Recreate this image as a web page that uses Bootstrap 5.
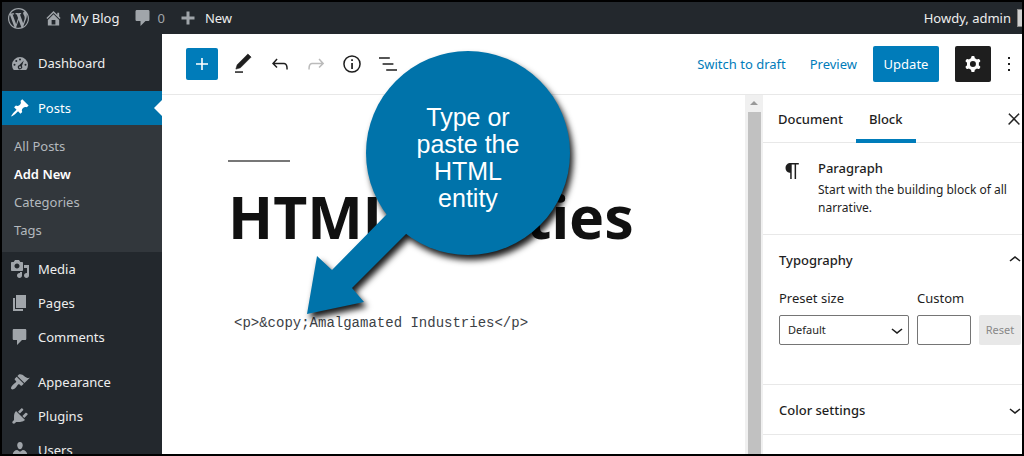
<!DOCTYPE html>
<html lang="en">
<head>
<meta charset="utf-8">
<meta name="viewport" content="width=device-width, initial-scale=1">
<title>Edit Post</title>
<link href="https://cdn.jsdelivr.net/npm/bootstrap@5.3.0/dist/css/bootstrap.min.css" rel="stylesheet">
<style>
body{font-family:"Noto Sans","Open Sans",sans-serif;font-size:13px;line-height:18px;color:#1e1e1e;background:#fff}
a{text-decoration:none}
svg{display:block;flex:none;fill:currentColor}
.frame{border:2px solid #000}
.adminbar{height:32px;background:#23282d;padding-left:6px}
.adminbar a{color:#eee}
.adminbar a.count{color:#a0a5aa;margin:0 14px}
.adminbar svg,.side-menu svg{color:#a0a5aa}
.avatar{width:5px;height:18px;margin-left:6px;background:#d0d0d0;border:1px solid #888;border-right:0}
.side-menu{width:160px;background:#23282d;padding-top:12px}
.side-menu .item{height:34px;padding-left:8px;gap:8px;color:#eee}
.side-menu .item.current{background:#0073aa;color:#fff}
.side-menu .item.current svg{color:#fff}
.item.current::after{content:"";position:absolute;right:0;border:8px solid transparent;border-right-color:#fff}
.menu-gap{margin-top:11px}
.submenu{background:#32373c;padding:7px 0 8px 12px}
.submenu a{height:28px;color:#b4b9be}
.submenu a.current{color:#fff;font-weight:600}
.toolbar{height:61px;border-bottom:1px solid #e8e8e8;padding:0 7px 0 24px}
.tools{margin-left:14px;gap:12px}
.tool{width:24px;height:24px;padding:0;border:0;background:none;color:#1e1e1e}
.tool:disabled{color:#bbb}
.tool-add{width:32px;height:32px;padding:4px;border:0;border-radius:2px;background:#007cba;color:#fff}
.toolbar a{color:#007cba}
.btn-update{width:66px;height:36px;padding:0;border:0;border-radius:2px;background:#007cba;color:#fff;font-size:13px}
.btn-cog{width:36px;height:36px;padding:6px;border:0;border-radius:2px;background:#1e1e1e;color:#fff}
.more{width:12px}
.canvas{padding:65px 16px 0 66px}
.rule{width:62px;height:2px;background:#777}
.post-title{font-size:59px;font-weight:700;line-height:72px;margin-top:18px;color:#111}
.code-block{font-family:"Liberation Mono",monospace;font-size:14px;line-height:20px;margin:61px 0 0 6px;color:#3c4146}
.scroll{width:18px;background:#f0f0f0}
.scroll .arrow{height:17px;color:#999}
.scroll .thumb{width:13px;background:#c1c1c1}
.inspector{width:259px}
.inspector .tabs{height:48px;border-bottom:1px solid #e8e8e8}
.inspector .tabs button{height:48px;border:0;border-bottom:4px solid transparent;padding:4px 13px 0;background:none;font-weight:500;color:#1e1e1e}
.inspector .tabs button:first-child{padding-left:15px}
.inspector .tabs button.on{border-color:#007cba}
.inspector .tabs .shut{padding:0 2px 0 0;border:0;margin-left:auto}
.section{border-bottom:1px solid #e8e8e8}
.blockcard{padding:16px 8px 16px 17px;gap:13px;height:92px}
.blockcard .about{font-size:12px}
.fold{height:49px;padding:0 0 0 16px;border:0;background:none;font-weight:500;color:#1e1e1e}
.fold svg{margin-right:-5px}
.typo{padding:5px 1px 39px 16px;gap:8px}
.typo label{margin-bottom:8px}
.typo .form-select,.typo .form-control{height:30px;border:1px solid #757575;border-radius:2px;font-size:11px;padding:0 8px;color:#1e1e1e}
.typo .form-select{width:130px;background:none}
.typo .form-control{width:54px}
.typo .reset{height:30px;width:42px;padding:0;border:0;border-radius:2px;background:#e8e8e8;color:#888;font-size:11px}
.chev{right:0;top:3px}
/* instruction bubble lying over the editor */
.bubble{left:136px;top:8px;width:280px;height:290px;pointer-events:none}
.bubble svg{fill:#0073aa;filter:drop-shadow(3px 5px 3px rgba(0,0,0,.9))}
.bubble p{left:118px;top:62px;width:104px;font:25px/27px "Liberation Sans",Arial,sans-serif;color:#fff}
</style>
</head>
<body>
<div class="frame d-flex flex-column vh-100 overflow-hidden">
<header class="adminbar d-flex align-items-center flex-shrink-0">
  <a href="#" class="me-3" aria-label="WordPress"><svg width="21" height="21" viewBox="0 0 20 20"><path d="M20 10c0-5.51-4.49-10-10-10C4.48 0 0 4.49 0 10c0 5.52 4.48 10 10 10 5.51 0 10-4.48 10-10zM7.78 15.37L4.37 6.22c.55-.02 1.17-.08 1.17-.08.5-.06.44-1.13-.06-1.11 0 0-1.45.11-2.37.11-.18 0-.37 0-.58-.01C4.12 2.69 6.87 1.11 10 1.11c2.33 0 4.45.87 6.05 2.34-.68-.11-1.65.39-1.65 1.58 0 .74.45 1.36.9 2.1.35.61.55 1.36.55 2.46 0 1.49-1.4 5-1.4 5l-3.03-8.37c.54-.02.82-.17.82-.17.5-.05.44-1.25-.06-1.22 0 0-1.44.12-2.38.12-.87 0-2.33-.12-2.33-.12-.5-.03-.56 1.2-.06 1.22l.92.08 1.26 3.41zM17.41 10c.24-.64.74-1.87.43-4.25.7 1.29 1.05 2.71 1.05 4.25 0 3.29-1.73 6.24-4.4 7.78.97-2.59 1.94-5.2 2.92-7.78zM6.1 18.09C3.12 16.65 1.11 13.53 1.11 10c0-1.3.23-2.48.72-3.59C3.25 10.3 4.67 14.2 6.1 18.09zm4.03-6.63l2.58 6.98c-.86.29-1.76.45-2.71.45-.79 0-1.57-.11-2.29-.33.81-2.38 1.62-4.74 2.42-7.1z"/></svg></a>
  <a href="#" class="d-flex align-items-center"><svg class="me-2" width="17" height="18" viewBox="1 1 18 18"><path fill-rule="evenodd" d="M16 8.5l1.53 1.53-1.06 1.06L10 4.6l-6.47 6.49-1.06-1.06L10 2.5l4 4v-2h2v4zm-6-2.46l6 5.99V18H4v-5.97zM12 17v-5H8v5h4z"/></svg>My Blog</a>
  <a href="#" class="count d-flex align-items-center"><svg class="me-1" width="20" height="20" viewBox="0 0 20 20"><path d="M4 2h11c1 0 1.500.5 1.500 1.500v8c0 1-.5 1.500-1.500 1.500h-2.500l-5 5v-5H4c-1 0-1.500-.5-1.500-1.500v-8C2.500 2.500 3 2 4 2z"/></svg>0</a>
  <a href="#" class="d-flex align-items-center"><svg class="me-2" width="18" height="18" viewBox="0 0 18 18"><path d="M7.500 2.500h3v5h5v3h-5v5h-3v-5h-5v-3h5z"/></svg>New</a>
  <a href="#" class="d-flex align-items-center ms-auto">Howdy, admin<span class="avatar"></span></a>
</header>
<div class="d-flex flex-grow-1 overflow-hidden">
<nav class="side-menu flex-shrink-0 overflow-hidden">
  <a href="#" class="item d-flex align-items-center"><svg width="20" height="20" viewBox="0 0 20 20"><path fill-rule="evenodd" d="M3.760 17h12.480A8 8 0 1 0 3.760 17zM9 6.500a1 1 0 1 0 2 0 1 1 0 1 0-2 0zM5.300 8a1 1 0 1 0 2 0 1 1 0 1 0-2 0zM3.500 11.700a1 1 0 1 0 2 0 1 1 0 1 0-2 0zM14.500 11.700a1 1 0 1 0 2 0 1 1 0 1 0-2 0zM13.800 7.400l-1.900 5.600a2.200 2.200 0 1 1-2.500-1zM10 13.200a1 1 0 1 0 .1 2 1 1 0 0 0-.1-2z"/></svg>Dashboard</a>
  <a href="#" class="item current menu-gap d-flex align-items-center position-relative"><svg width="20" height="20" viewBox="0 0 20 20"><path d="M10.440 3.020l1.820-1.820 6.360 6.350-1.830 1.820c-1.050-.68-2.480-.57-3.410.36l-.75.75c-.92.93-1.040 2.350-.35 3.410l-1.830 1.820-2.410-2.410-2.800 2.790c-.42.42-3.380 2.710-3.800 2.290s1.860-3.390 2.280-3.810l2.790-2.790L4.100 9.360l1.830-1.820c1.050.69 2.480.57 3.400-.36l.75-.75c.93-.92 1.050-2.350.36-3.410z"/></svg>Posts</a>
  <div class="submenu">
    <a href="#" class="d-flex align-items-center">All Posts</a>
    <a href="#" class="d-flex align-items-center current">Add New</a>
    <a href="#" class="d-flex align-items-center">Categories</a>
    <a href="#" class="d-flex align-items-center">Tags</a>
  </div>
  <a href="#" class="item d-flex align-items-center"><svg width="20" height="20" viewBox="0 0 20 20"><path fill-rule="evenodd" d="M13 11V4c0-.55-.45-1-1-1h-1.670L9 1H5L3.670 3H2c-.55 0-1 .45-1 1v7c0 .55.45 1 1 1h10c.55 0 1-.45 1-1zM7 4.500c1.380 0 2.500 1.120 2.500 2.500S8.380 9.500 7 9.500 4.500 8.380 4.500 7 5.620 4.500 7 4.500zM14 6h5v10.500c0 1.380-1.120 2.500-2.500 2.500S14 17.880 14 16.500s1.120-2.500 2.500-2.500c.17 0 .34.02.5.05V9h-3V6zm-4 8.050V13h2v3.500c0 1.380-1.120 2.500-2.500 2.500S7 17.880 7 16.500 8.120 14 9.500 14c.17 0 .34.02.5.05z"/></svg>Media</a>
  <a href="#" class="item d-flex align-items-center"><svg width="20" height="20" viewBox="0 0 20 20"><path d="M6 15V2h10v13H6zm-1 1h8v2H3V5h2v11z"/></svg>Pages</a>
  <a href="#" class="item d-flex align-items-center"><svg width="20" height="20" viewBox="0 0 20 20"><path d="M4 2h11c.8 0 1.300.5 1.300 1.300v8.400c0 .8-.5 1.300-1.300 1.300h-3l-5 5v-5H4c-.8 0-1.300-.5-1.300-1.300V3.300C2.700 2.500 3.200 2 4 2z"/></svg>Comments</a>
  <a href="#" class="item menu-gap d-flex align-items-center"><svg width="20" height="20" viewBox="0 0 20 20"><path d="M14.480 11.060L7.410 3.990l1.500-1.500c.5-.56 2.300-.47 3.510.32 1.210.8 1.430 1.280 2.910 2.100 1.180.64 2.450 1.260 4.450.85zm-.71.71L6.700 4.700 4.930 6.470c-.39.39-.39 1.020 0 1.410l1.060 1.060c.39.39.39 1.030 0 1.420-.6.6-1.430 1.110-2.210 1.690-.35.26-.7.53-1.010.84C1.430 14.230.4 16.080 1.400 17.070c.99 1 2.840-.03 4.180-1.360.31-.31.58-.66.85-1.020.57-.78 1.080-1.610 1.690-2.210.39-.39 1.020-.39 1.410 0l1.060 1.060c.39.39 1.020.39 1.410 0z"/></svg>Appearance</a>
  <a href="#" class="item d-flex align-items-center"><svg width="20" height="20" viewBox="0 0 20 20"><path d="M13.110 4.360L9.870 7.600 8 5.730l3.240-3.240c.35-.34 1.050-.2 1.560.32.52.51.66 1.210.31 1.550zm-8 1.770l.91-1.120 9.010 9.010-1.190.84c-.71.71-2.630 1.160-3.820 1.160H6.140L4.900 17.260c-.59.59-1.540.59-2.120 0-.59-.58-.59-1.530 0-2.120l1.240-1.240v-3.880c0-1.130.4-3.190 1.090-3.890zm7.260 3.970l3.240-3.240c.34-.35 1.040-.21 1.550.31.52.51.66 1.210.31 1.550l-3.240 3.250z"/></svg>Plugins</a>
  <a href="#" class="item d-flex align-items-center"><svg width="20" height="20" viewBox="0 0 20 20"><path d="M10 9.250c-2.270 0-2.730-3.440-2.730-3.440C7 4.020 7.820 2 9.970 2c2.160 0 2.980 2.020 2.710 3.810 0 0-.41 3.440-2.680 3.440zm0 2.570L12.720 10c2.390 0 4.520 2.330 4.520 4.530v2.490s-3.650 1.130-7.240 1.130c-3.650 0-7.240-1.130-7.240-1.130v-2.490c0-2.250 1.940-4.480 4.470-4.480z"/></svg>Users</a>
</nav>
<main class="d-flex flex-column flex-grow-1 position-relative overflow-hidden">
  <div class="toolbar d-flex align-items-center flex-shrink-0">
    <button class="tool-add" aria-label="Add block"><svg width="24" height="24" viewBox="0 0 24 24"><path d="M18 11.200h-5.200V6h-1.600v5.200H6v1.600h5.200V18h1.600v-5.200H18z"/></svg></button>
    <div class="tools d-flex me-auto">
      <button class="tool" aria-label="Tools"><svg width="24" height="24" viewBox="1 0 24 24"><path stroke="currentColor" stroke-width=".6" d="M20.100 5.100L16.900 2 6.200 12.700l-1.300 4.400 4.500-1.300L20.100 5.100z"/><path d="M4 20.800h8v-1.500H4v1.500z"/></svg></button>
      <button class="tool" aria-label="Undo"><svg width="24" height="24" viewBox="0 0 24 24"><path d="M18.300 11.700c-.6-.6-1.400-.9-2.300-.9H6.700l2.900-3.300-1.100-1-4.500 5L8.500 16l1-1-2.700-2.700H16c.5 0 .9.2 1.300.5 1 1 1 3.400 1 4.500v.3h1.500v-.2c0-1.500 0-4.300-1.500-5.700z"/></svg></button>
      <button class="tool" disabled aria-label="Redo"><svg width="24" height="24" viewBox="0 0 24 24"><path d="M15.600 6.500l-1.100 1 2.900 3.300H8c-.9 0-1.700.3-2.300.9-1.400 1.500-1.400 4.200-1.400 5.600v.2h1.500v-.3c0-1.100 0-3.500 1-4.500.3-.3.7-.5 1.300-.5h9.200L14.500 15l1.100 1.100 4.600-4.600-4.600-5z"/></svg></button>
      <button class="tool" aria-label="Details"><svg width="24" height="24" viewBox="0 0 24 24"><path fill-rule="evenodd" d="M12 3.200a8.800 8.800 0 1 0 0 17.600 8.800 8.800 0 0 0 0-17.600zm0 16.100a7.300 7.300 0 1 1 0-14.600 7.300 7.300 0 0 1 0 14.600zM11.200 11h1.700v6h-1.700zM11.200 7.300h1.700V9h-1.700z"/></svg></button>
      <button class="tool" aria-label="Outline"><svg width="24" height="24" viewBox="0 0 24 24"><path d="M13.800 5.200H3v1.500h10.800V5.200zm-3.600 12v1.500H21v-1.500H10.200zm7.200-6H6.600v1.500h10.800v-1.500z"/></svg></button>
    </div>
    <a href="#" class="me-4">Switch to draft</a>
    <a href="#" class="me-3">Preview</a>
    <button class="btn-update me-3">Update</button>
    <button class="btn-cog me-2" aria-label="Settings"><svg width="24" height="24" viewBox="0 0 24 24"><path fill-rule="evenodd" d="M10.289 4.836A1 1 0 0111.275 4h1.306a1 1 0 01.987.836l.244 1.466c.787.26 1.503.679 2.108 1.218l1.393-.522a1 1 0 011.216.437l.653 1.130a1 1 0 01-.23 1.273l-1.148.944a6.025 6.025 0 010 2.435l1.149.946a1 1 0 01.23 1.272l-.653 1.130a1 1 0 01-1.216.437l-1.394-.522c-.605.54-1.320.958-2.108 1.218l-.244 1.466a1 1 0 01-.987.836h-1.306a1 1 0 01-.986-.836l-.244-1.466a5.995 5.995 0 01-2.108-1.218l-1.394.522a1 1 0 01-1.217-.436l-.653-1.131a1 1 0 01.23-1.272l1.149-.946a6.026 6.026 0 010-2.435l-1.148-.944a1 1 0 01-.23-1.272l.653-1.131a1 1 0 011.217-.437l1.393.522a5.994 5.994 0 012.108-1.218zM14.929 12a3 3 0 11-6 0 3 3 0 016 0z"/></svg></button>
    <button class="tool more ms-1" aria-label="More"><svg width="12" height="24" viewBox="0 0 12 24"><path d="M5 5h2v2H5zM5 11h2v2H5zM5 17h2v2H5z"/></svg></button>
  </div>
  <div class="d-flex flex-grow-1 overflow-hidden">
    <article class="canvas flex-grow-1 overflow-hidden">
      <div class="rule"></div>
      <h1 class="post-title mb-0 text-nowrap">HTML Entities</h1>
      <p class="code-block text-nowrap">&lt;p&gt;&amp;copy;Amalgamated Industries&lt;/p&gt;</p>
    </article>
    <div class="scroll d-flex flex-column align-items-center flex-shrink-0">
      <div class="arrow d-flex align-items-center"><svg width="8" height="5" viewBox="0 0 8 5"><path d="M4 0l4 4H0z"/></svg></div>
      <div class="thumb flex-grow-1"></div>
    </div>
    <aside class="inspector flex-shrink-0">
      <div class="tabs d-flex align-items-center">
        <button>Document</button><button class="on">Block</button>
        <button class="shut" aria-label="Close"><svg width="12" height="12" viewBox="4 4 16 16"><path stroke="currentColor" stroke-width=".6" d="M13 11.800l6.100-6.300-1-1-6.100 6.200-6.100-6.200-1 1 6.100 6.300-6.500 6.700 1 1 6.500-6.600 6.500 6.600 1-1z"/></svg></button>
      </div>
      <div class="section blockcard d-flex">
        <svg width="25" height="24" viewBox="0 0 24 24"><path d="M18.300 4H9.900v-.1l-.9.2c-2.300.4-4 2.400-4 4.800s1.700 4.400 4 4.800l.7.1V20h1.500V5.500h2.900V20h1.500V5.500h2.700V4z"/></svg>
        <div><div class="fw-medium mb-1">Paragraph</div><div class="about">Start with the building block of all narrative.</div></div>
      </div>
      <div class="section">
        <button class="fold w-100 d-flex align-items-center justify-content-between">Typography<svg width="24" height="24" viewBox="0 0 24 24"><path d="M6.500 12.400L12 8l5.500 4.400-.9 1.200L12 10l-4.500 3.600-1-1.200z"/></svg></button>
        <div class="typo d-flex align-items-end">
          <div><label for="preset" class="d-block">Preset size</label><div class="position-relative"><select id="preset" class="form-select"><option>Default</option></select><svg class="chev position-absolute" width="24" height="24" viewBox="0 0 24 24"><path d="M17.500 11.600L12 16l-5.500-4.400.9-1.200L12 14l4.500-3.600 1 1.200z"/></svg></div></div>
          <div><label for="custom" class="d-block">Custom</label><input id="custom" type="text" class="form-control"></div>
          <button class="reset" disabled>Reset</button>
        </div>
      </div>
      <div class="section"><button class="fold w-100 d-flex align-items-center justify-content-between">Color settings<svg width="24" height="24" viewBox="0 0 24 24"><path d="M17.500 11.600L12 16l-5.500-4.400.9-1.200L12 14l4.500-3.600 1 1.200z"/></svg></button></div>
    </aside>
  </div>
  <div class="bubble position-absolute">
    <svg width="280" height="290" viewBox="0 0 280 290"><circle cx="170" cy="111" r="102"/><path d="M9 272l10-58 15 14 55-56 20 19-55 55 12 14z"/></svg>
    <p class="position-absolute text-center mb-0">Type or paste the HTML entity</p>
  </div>
</main>
</div>
</div>
<script src="https://cdn.jsdelivr.net/npm/bootstrap@5.3.0/dist/js/bootstrap.bundle.min.js"></script>
</body>
</html>
